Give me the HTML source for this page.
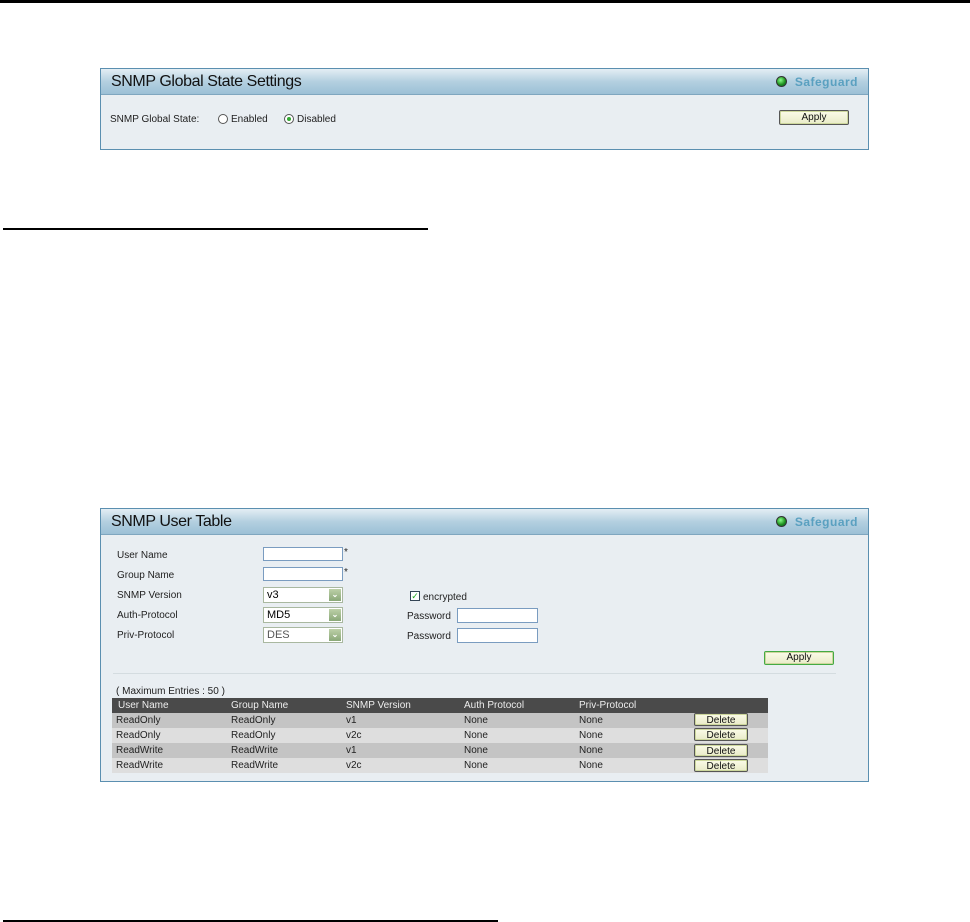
<!DOCTYPE html>
<html><head><style>
*{margin:0;padding:0;box-sizing:border-box}
body{width:970px;height:922px;background:#fff;position:relative;font-family:"Liberation Sans",Arial,sans-serif;overflow:hidden}
.a{position:absolute}
.panel{position:absolute;border:1px solid #5b8fb0;background:#e9eef2}
.hdr{position:absolute;left:0;right:0;top:0;height:26px;background:linear-gradient(#e4eef4,#b4d0e0 50%,#9cc0d6);border-bottom:1px solid #7fa6bf}
.hdr .t{position:absolute;left:10px;top:4px;font-size:16px;color:#111;letter-spacing:-0.4px}
.sg{position:absolute;right:10px;top:6px;font-size:12px;color:#5aa0c0;font-weight:bold;letter-spacing:.5px}
.sg i{display:inline-block;width:11px;height:11px;border-radius:50%;background:radial-gradient(circle at 40% 35%,#8f8,#1a8a1a 60%,#064);vertical-align:-1px;margin-right:8px;border:1px solid #333}
.f{font-size:10px;color:#222}
.btn{position:absolute;border:1px solid #555;border-radius:2px;background:linear-gradient(#fbfbe8,#e9ebc8);font-size:10px;text-align:center;color:#111;box-shadow:inset 0 0 0 1px #cdd79c}
.inp{position:absolute;background:#fff;border:1px solid #7a9cc0;height:14px}
.sel{position:absolute;background:#fff;border:1px solid #a9b8a0;height:16px;font-size:11px;padding-left:3px;line-height:14px}
.sel b{position:absolute;right:1px;top:1px;width:12px;height:12px;background:linear-gradient(#bdd0a8,#8aa878);color:#fff;font-size:8px;text-align:center;line-height:12px}
.rad{position:absolute;width:10px;height:10px;border:1px solid #555;border-radius:50%;background:#fff}
table{border-collapse:collapse;font-size:10px;color:#222}
td{height:15px;padding:0 0 0 4px}
</style></head><body>
<div class="a" style="left:0;top:0;width:970px;height:3px;background:#000"></div>
<div class="a" style="left:3px;top:228px;width:425px;height:2px;background:#000"></div>
<div class="a" style="left:3px;top:920px;width:495px;height:2px;background:#000"></div>

<div class="panel" style="left:100px;top:68px;width:769px;height:82px">
 <div class="hdr"><span class="t">SNMP Global State Settings</span><span class="sg"><i></i>Safeguard</span></div>
 <span class="a f" style="left:9px;top:45px">SNMP Global State:</span>
 <span class="rad" style="left:117px;top:45px"></span><span class="a f" style="left:130px;top:45px">Enabled</span>
 <span class="rad" style="left:183px;top:45px"><span class="a" style="left:2px;top:2px;width:4px;height:4px;border-radius:50%;background:#3a3"></span></span><span class="a f" style="left:196px;top:45px">Disabled</span>
 <div class="btn" style="left:678px;top:41px;width:70px;height:15px;line-height:13px">Apply</div>
</div>

<div class="panel" style="left:100px;top:508px;width:769px;height:274px">
 <div class="hdr"><span class="t">SNMP User Table</span><span class="sg"><i></i>Safeguard</span></div>
 <span class="a f" style="left:16px;top:41px">User Name</span>
 <span class="a f" style="left:16px;top:61px">Group Name</span>
 <span class="a f" style="left:16px;top:81px">SNMP Version</span>
 <span class="a f" style="left:16px;top:101px">Auth-Protocol</span>
 <span class="a f" style="left:16px;top:121px">Priv-Protocol</span>
 <div class="inp" style="left:162px;top:38px;width:80px"></div><span class="a f" style="left:243px;top:38px">*</span>
 <div class="inp" style="left:162px;top:58px;width:80px"></div><span class="a f" style="left:243px;top:58px">*</span>
 <div class="sel" style="left:162px;top:78px;width:80px">v3<b>⌄</b></div>
 <div class="sel" style="left:162px;top:98px;width:80px">MD5<b>⌄</b></div>
 <div class="sel" style="left:162px;top:118px;width:80px;color:#555">DES<b>⌄</b></div>
 <span class="a" style="left:309px;top:82px;width:10px;height:10px;border:1px solid #345;background:#fff;font-size:9px;line-height:8px;color:#2a2;text-align:center">✓</span>
 <span class="a f" style="left:322px;top:83px">encrypted</span>
 <span class="a f" style="left:306px;top:102px">Password</span><div class="inp" style="left:356px;top:99px;width:81px;height:15px"></div>
 <span class="a f" style="left:306px;top:122px">Password</span><div class="inp" style="left:356px;top:119px;width:81px;height:15px"></div>
 <div class="btn" style="left:663px;top:142px;width:70px;height:14px;line-height:12px;border-color:#4a4">Apply</div>
 <div class="a" style="left:12px;top:164px;width:723px;height:1px;background:#d4dce0"></div>
 <span class="a f" style="left:15px;top:177px">( Maximum Entries : 50 )</span>
 <table class="a" style="left:11px;top:189px;width:656px">
  <tr style="background:#4a4a4a;color:#eee;height:12px"><td style="width:115px;height:12px;padding-left:6px">User Name</td><td style="width:115px">Group Name</td><td style="width:118px">SNMP Version</td><td style="width:115px">Auth Protocol</td><td style="width:115px">Priv-Protocol</td><td></td></tr>
  <tr style="background:#c4c4c4"><td>ReadOnly</td><td>ReadOnly</td><td>v1</td><td>None</td><td>None</td><td></td></tr>
  <tr style="background:#dedede"><td>ReadOnly</td><td>ReadOnly</td><td>v2c</td><td>None</td><td>None</td><td></td></tr>
  <tr style="background:#c4c4c4"><td>ReadWrite</td><td>ReadWrite</td><td>v1</td><td>None</td><td>None</td><td></td></tr>
  <tr style="background:#dedede"><td>ReadWrite</td><td>ReadWrite</td><td>v2c</td><td>None</td><td>None</td><td></td></tr>
 </table>
 <div class="btn" style="left:593px;top:204px;width:54px;height:13px;line-height:13px">Delete</div>
 <div class="btn" style="left:593px;top:219px;width:54px;height:13px;line-height:13px">Delete</div>
 <div class="btn" style="left:593px;top:235px;width:54px;height:13px;line-height:13px">Delete</div>
 <div class="btn" style="left:593px;top:250px;width:54px;height:13px;line-height:13px">Delete</div>
</div>
</body></html>
